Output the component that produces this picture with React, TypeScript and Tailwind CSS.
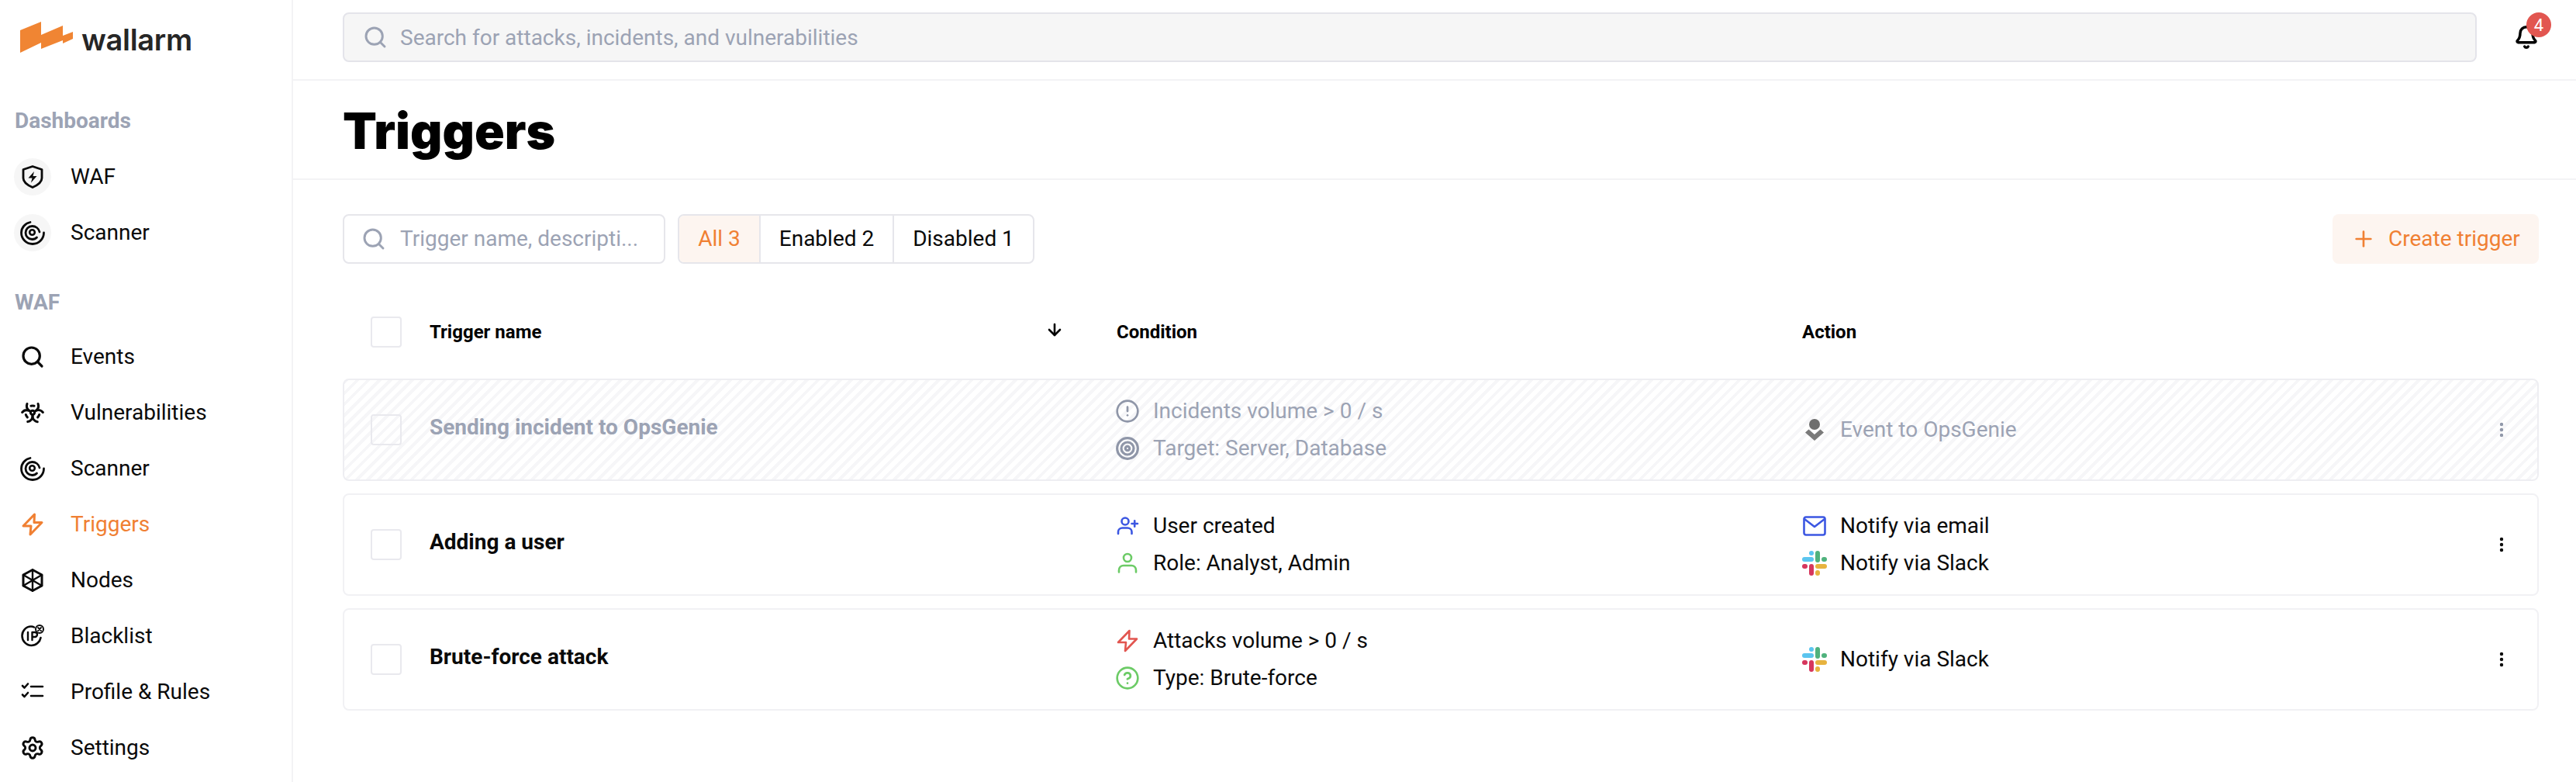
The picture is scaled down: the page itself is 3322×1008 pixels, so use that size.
import type { ReactNode } from "react";
import { ArrowDown, Bell, Biohazard, CircleAlert, CircleHelp, EllipsisVertical, Plus, Search, Settings, Target } from "lucide-react";

function Svg({ children, className = "" }: { children: ReactNode; className?: string }) {
  return (
    <svg viewBox="0 0 32 32" fill="none" stroke="currentColor" strokeWidth="2.6" strokeLinecap="round" strokeLinejoin="round" className={`h-8 w-8 shrink-0 ${className}`}>
      {children}
    </svg>
  );
}

const ShieldIcon = () => (
  <Svg>
    <path d="M16 2.500 28 6.500v11c0 5.500-5 9-12 12-7-3-12-6.500-12-12v-11z" strokeWidth="2.800" />
    <path d="M18 9 10.500 17.500h5L14 23.500l7.500-8.500h-5z" fill="currentColor" stroke="none" />
  </Svg>
);

const ScannerIcon = () => (
  <Svg>
    <path d="M13 2.500C6.500 3.800 1.500 9.300 1.500 16c0 8 6.500 14.500 14.500 14.500S30.500 24 30.500 16" strokeWidth="2.800" />
    <path d="M25 15C24 10.500 20 7.500 15.500 7.500 10.800 7.500 7 11.300 7 16s3.800 8.500 8.500 8.500c2.500 0 4.500-.8 6-2.500" strokeWidth="2.800" />
    <circle cx="15.500" cy="15.500" r="3.300" strokeWidth="2.600" />
  </Svg>
);

const BoltIcon = () => (
  <Svg>
    <path d="M18.500 3 4 18h10l-1 11 15-15.500H18z" strokeWidth="3" />
  </Svg>
);

const NodesIcon = () => (
  <Svg>
    <path d="M16 2.500 28 9v14l-12 6.500L4 23V9z" strokeWidth="3" />
    <path d="M16 2.500v27M4 9l24 14M28 9 4 23" strokeWidth="2.400" />
  </Svg>
);

const BlacklistIcon = () => (
  <Svg>
    <path d="M18 4.500C16.800 3.800 15.500 3.500 14 3.500 7.600 3.500 2.500 9 2.500 15.500S7.600 28 14.500 28c6 0 11-4.400 12-10" />
    <path d="M10 11v10M15.500 21V11h3.500a3 3 0 0 1 0 6h-3.500" strokeWidth="2.400" />
    <circle cx="25" cy="7" r="5" strokeWidth="2" />
    <path d="m23 5 4 4m0-4-4 4" strokeWidth="1.800" />
  </Svg>
);

const ChecklistIcon = () => (
  <Svg>
    <path d="m3 8 2.500 2.500L10 5.500M3 19.500 5.500 22 10 17" />
    <path d="M14 9h15M14 21h15" />
  </Svg>
);

const UserPlusIcon = () => (
  <Svg className="text-[#3c57e2]">
    <circle cx="13" cy="10" r="4.500" />
    <path d="M4 26v-2.500c0-3 2.500-5 5.500-5H16c3 0 5.500 2 5.500 5V26M21.500 13h7.500M25.200 9.300v7.500" />
  </Svg>
);

const UserIcon = () => (
  <Svg className="text-[#6ccb66]">
    <circle cx="16" cy="9" r="5" />
    <path d="M5 27.500V25c0-3.500 2.500-6 6-6h10c3.500 0 6 2.500 6 6v2.500" />
  </Svg>
);

const MailIcon = () => (
  <Svg className="text-[#3c57e2]">
    <rect x="2.500" y="4.500" width="27" height="23" rx="2.500" />
    <path d="m3 7 13 10L29 7" />
  </Svg>
);

const SlackIcon = () => (
  <svg viewBox="0 0 32 32" className="h-8 w-8 shrink-0">
    <rect x="0" y="8" width="15" height="6" rx="3" fill="#5bc5ef" />
    <rect x="9" y="0" width="6" height="6" rx="3" fill="#5bc5ef" />
    <rect x="17" y="0" width="6" height="15" rx="3" fill="#4fb27d" />
    <rect x="25" y="8" width="7" height="6" rx="3" fill="#4fb27d" />
    <rect x="17" y="17" width="15" height="6" rx="3" fill="#e7b33f" />
    <rect x="17" y="25" width="6" height="7" rx="3" fill="#e7b33f" />
    <rect x="9" y="17" width="6" height="15" rx="3" fill="#d6365d" />
    <rect x="0" y="17" width="7" height="6" rx="3" fill="#d6365d" />
  </svg>
);

const OpsGenieIcon = () => (
  <svg viewBox="0 0 32 32" className="h-8 w-8 shrink-0">
    <circle cx="16" cy="9" r="7" fill="#6e6e6e" />
    <path d="M8.500 15.500 16 22l7.500-6.500 4.500 4L16 30 4 19.500z" fill="#7a7a7a" />
  </svg>
);

const dashboards = [
  { label: "WAF", icon: <ShieldIcon /> },
  { label: "Scanner", icon: <ScannerIcon /> },
];

const wafItems = [
  { label: "Events", icon: <Search className="h-8 w-8" strokeWidth={2.400} /> },
  { label: "Vulnerabilities", icon: <Biohazard className="h-8 w-8" strokeWidth={2.300} /> },
  { label: "Scanner", icon: <ScannerIcon /> },
  { label: "Triggers", icon: <BoltIcon />, active: true },
  { label: "Nodes", icon: <NodesIcon /> },
  { label: "Blacklist", icon: <BlacklistIcon /> },
  { label: "Profile & Rules", icon: <ChecklistIcon /> },
  { label: "Settings", icon: <Settings className="h-8 w-8" strokeWidth={2.200} /> },
];

function NavItem({ label, icon, circle, active }: { label: string; icon: ReactNode; circle?: boolean; active?: boolean }) {
  return (
    <div className={`flex h-[72px] items-center gap-[25px] pl-[18px] text-[28px] ${active ? "text-[#f08033]" : "text-[#0a0a0a]"}`}>
      <div className={`flex h-12 w-12 items-center justify-center rounded-full ${circle ? "bg-[#f6f6f6]" : ""}`}>{icon}</div>
      <span>{label}</span>
    </div>
  );
}

function Sidebar() {
  return (
    <aside className="h-screen w-[378px] shrink-0 overflow-hidden border-r-2 border-[#f3f3f5]">
      <div className="flex h-[132px] items-start gap-[11px] pl-[26px] pt-[28px]">
        <svg viewBox="0 0 68 40" className="h-10 w-[68px] shrink-0">
          <path d="M0 11 27 0v17L55 5v13l13-5v9l-13 6v-4L27 35v-8L0 40z" fill="#f08533" />
        </svg>
        <span className="mt-[-1px] text-[38px] font-semibold leading-[48px] tracking-[-0.3px] text-[#262626] [font-family:Inter,sans-serif]">wallarm</span>
      </div>
      <div className="flex h-12 items-center pl-[19px] text-[28px] font-bold text-[#9ca3b4]">Dashboards</div>
      <div className="mt-3">
        {dashboards.map((d) => (
          <NavItem key={d.label} label={d.label} icon={d.icon} circle />
        ))}
      </div>
      <div className="mt-[30px] flex h-12 items-center pl-[19px] text-[28px] font-bold text-[#9ca3b4]">WAF</div>
      <div className="mt-[10px]">
        {wafItems.map((d) => (
          <NavItem key={d.label} label={d.label} icon={d.icon} active={d.active} />
        ))}
      </div>
    </aside>
  );
}

function Checkbox() {
  return <div className="h-10 w-10 shrink-0 rounded-[4px] border-2 border-[#e9e9ee]" />;
}

function Line({ icon, text }: { icon: ReactNode; text: string }) {
  return (
    <div className="flex h-12 items-center gap-[17px]">
      {icon}
      <span>{text}</span>
    </div>
  );
}

function TriggerRow({ name, condition, action, disabled }: { name: string; condition: ReactNode; action: ReactNode; disabled?: boolean }) {
  return (
    <div
      className={`grid h-[132px] grid-cols-[960px_886px_1fr] items-center rounded-lg border-2 pl-[34px] text-[28px] ${
        disabled
          ? "border-[#eeeef2] bg-[repeating-linear-gradient(135deg,#f6f6f8_0,#f6f6f8_4px,#ffffff_4px,#ffffff_10px)] text-[#9ca3b4]"
          : "border-[#f1f1f4] text-[#0a0a0a]"
      }`}
    >
      <div className="flex items-center gap-9">
        <Checkbox />
        <span className="mt-[-7px] font-bold">{name}</span>
      </div>
      <div>{condition}</div>
      <div className="flex items-center justify-between pr-[34px]">
        <div>{action}</div>
        <EllipsisVertical className={`h-6 w-6 ${disabled ? "text-[#8f96a8]" : "text-[#0a0a0a]"}`} strokeWidth={2.400} />
      </div>
    </div>
  );
}

export default function App() {
  return (
    <div className="flex h-screen w-full overflow-hidden bg-white [font-family:Roboto,sans-serif]">
      <Sidebar />
      <main className="min-w-0 flex-1">
        <div className="relative h-[104px] border-b-2 border-[#f3f3f5] pl-[64px] pr-[128px] pt-4">
          <div className="flex h-16 items-center gap-4 rounded-lg border-2 border-[#e4e4ea] bg-[#f6f6f6] pl-6 text-[28px] text-[#9ca3b4]">
            <Search className="h-8 w-8" strokeWidth={2.200} />
            <span className="pt-[2px]">Search for attacks, incidents, and vulnerabilities</span>
          </div>
          <div className="absolute left-[2864px] top-[32px]">
            <Bell className="h-8 w-8 text-black" strokeWidth={2.600} />
          </div>
          <div className="absolute left-[2880px] top-4 flex h-8 w-8 items-center justify-center rounded-full bg-[#e25650] text-[22px] text-white">4</div>
        </div>
        <div className="flex h-[128px] items-center border-b-2 border-[#f3f3f5] pl-[64px] pt-[4px]">
          <h1 className="text-[64px] font-black leading-none text-black [font-family:Inter,sans-serif]">Triggers</h1>
        </div>
        <div className="pl-[64px] pr-[48px] pt-[44px]">
          <div className="flex h-16 items-center text-[28px]">
            <div className="flex h-16 w-[416px] items-center gap-[18px] rounded-lg border-2 border-[#e6e6eb] pl-[22px] text-[#9ca3b4]">
              <Search className="h-8 w-8" strokeWidth={2.200} />
              <span>Trigger name, descripti...</span>
            </div>
            <div className="ml-4 flex h-16 overflow-hidden rounded-lg border-2 border-[#e6e6eb] text-[#0a0a0a]">
              <div className="flex w-[103px] items-center justify-center bg-[#fdf5f0] text-[#f08033]">All 3</div>
              <div className="flex w-[172px] items-center justify-center border-l-2 border-[#e6e6eb]">Enabled 2</div>
              <div className="flex w-[181px] items-center justify-center border-l-2 border-[#e6e6eb]">Disabled 1</div>
            </div>
            <button className="ml-auto flex h-16 w-[266px] items-center gap-4 rounded-lg bg-[#fdf5f0] pl-[24px] text-[#f08033]">
              <Plus className="h-8 w-8" strokeWidth={2} />
              <span>Create trigger</span>
            </button>
          </div>
          <div className="mb-10 mt-[68px] grid h-10 grid-cols-[960px_886px_1fr] items-center pl-9 text-[24px] font-bold text-black">
            <div className="flex items-center gap-9">
              <Checkbox />
              <span>Trigger name</span>
              <ArrowDown className="ml-auto mr-[66px] mt-[-6px] h-6 w-6" strokeWidth={2.600} />
            </div>
            <div className="pl-[2px]">Condition</div>
            <div>Action</div>
          </div>
          <div className="flex flex-col gap-4">
            <TriggerRow
              disabled
              name="Sending incident to OpsGenie"
              condition={
                <>
                  <Line icon={<CircleAlert className="h-8 w-8 text-[#8f96a8]" strokeWidth={2} />} text="Incidents volume > 0 / s" />
                  <Line icon={<Target className="h-8 w-8 text-[#8f96a8]" strokeWidth={2.400} />} text="Target: Server, Database" />
                </>
              }
              action={<Line icon={<OpsGenieIcon />} text="Event to OpsGenie" />}
            />
            <TriggerRow
              name="Adding a user"
              condition={
                <>
                  <Line icon={<UserPlusIcon />} text="User created" />
                  <Line icon={<UserIcon />} text="Role: Analyst, Admin" />
                </>
              }
              action={
                <>
                  <Line icon={<MailIcon />} text="Notify via email" />
                  <Line icon={<SlackIcon />} text="Notify via Slack" />
                </>
              }
            />
            <TriggerRow
              name="Brute-force attack"
              condition={
                <>
                  <Line icon={<Svg className="text-[#e25650]"><path d="M18.500 3 4 18h10l-1 11 15-15.500H18z" /></Svg>} text="Attacks volume > 0 / s" />
                  <Line icon={<CircleHelp className="h-8 w-8 text-[#6ccb66]" strokeWidth={2} />} text="Type: Brute-force" />
                </>
              }
              action={<Line icon={<SlackIcon />} text="Notify via Slack" />}
            />
          </div>
        </div>
      </main>
    </div>
  );
}
